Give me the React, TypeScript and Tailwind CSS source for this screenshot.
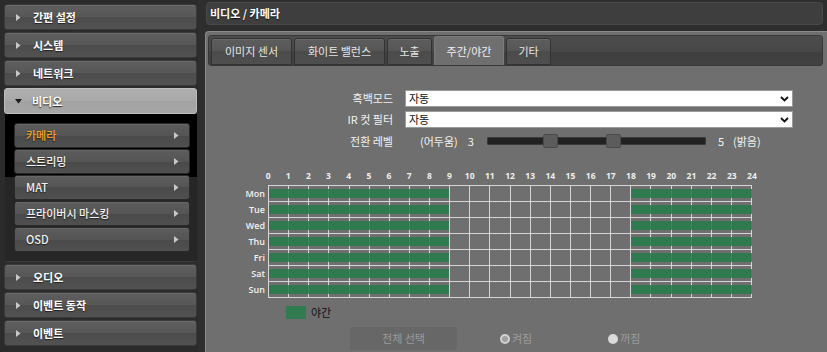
import React from "react";

function Arrow({ down = false, dark = false }: { down?: boolean; dark?: boolean }) {
  if (down) {
    return (
      <svg width="7" height="5" viewBox="0 0 7 5" className="shrink-0">
        <polygon points="0,0 7,0 3.5,4.5" fill={dark ? "#1a1a1a" : "#ccc"} />
      </svg>
    );
  }
  return (
    <svg width="5" height="7" viewBox="0 0 5 7" className="shrink-0">
      <polygon points="0,0 4.5,3.5 0,7" fill={dark ? "#1a1a1a" : "#c8c8c8"} />
    </svg>
  );
}

function MenuItem({ label, active = false }: { label: string; active?: boolean }) {
  return (
    <div
      className={
        active
          ? "h-[26px] shrink-0 rounded-[3px] border border-[#bdbdbd] bg-[linear-gradient(#b0b0b0,#a8a8a8_50%,#a2a2a2_50%,#a6a6a6)] flex items-center pl-[10px] gap-[10px]"
          : "h-[26px] shrink-0 rounded-[3px] border border-[#3a3a3a] bg-[linear-gradient(#5e5e5e,#575757_50%,#4c4c4c_50%,#525252)] shadow-[inset_0_1px_0_#6a6a6a] flex items-center pl-[11px] gap-[12px]"
      }
    >
      <Arrow down={active} dark={active} />
      <span className="text-[11px] font-bold text-white leading-none [text-shadow:0_1px_1px_#222]">{label}</span>
    </div>
  );
}

function SubItem({ label, active = false }: { label: string; active?: boolean }) {
  return (
    <div className="h-[25px] shrink-0 rounded-[3px] border border-[#2a2a2a] bg-[linear-gradient(#5c5c5c,#555_50%,#4a4a4a_50%,#505050)] shadow-[inset_0_1px_0_#666] flex items-center justify-between pl-[11px] pr-[10px]">
      <span
        className={
          active
            ? "text-[11px] font-medium text-[#f5a21f] leading-none [text-shadow:0_1px_1px_#222]"
            : "text-[11px] font-medium text-[#f2f2f2] leading-none [text-shadow:0_1px_1px_#222]"
        }
      >
        {label}
      </span>
      <Arrow />
    </div>
  );
}

function Tab({ label, w, active = false }: { label: string; w: string; active?: boolean }) {
  return (
    <div
      className={
        active
          ? `${w} h-[29px] rounded-t-[3px] bg-[#6f6f6f] border border-b-0 border-[#7c7c7c] flex items-center justify-center text-[11px] text-[#f0f0f0]`
          : `${w} h-[27px] rounded-t-[3px] border border-[#333] bg-[linear-gradient(#5d5d5d,#565656_50%,#4b4b4b_50%,#4f4f4f)] shadow-[inset_0_1px_0_#6a6a6a] flex items-center justify-center text-[11px] text-[#e6e6e6]`
      }
    >
      {label}
    </div>
  );
}

function SelectBox({ value }: { value: string }) {
  return (
    <div className="ml-[12px] w-[388px] h-[17px] bg-white border border-[#9a9a9a] flex items-center justify-between pl-[3px] pr-[3px]">
      <span className="text-[11px] text-[#111] leading-none">{value}</span>
      <svg width="9" height="6" viewBox="0 0 9 6">
        <polyline points="1,1 4.5,4.5 8,1" fill="none" stroke="#111" strokeWidth="1.8" />
      </svg>
    </div>
  );
}

export default function App() {
  const hours = Array.from({ length: 25 }, (_, i) => i);
  const cells = Array.from({ length: 24 }, (_, i) => i);
  const days = ["Mon", "Tue", "Wed", "Thu", "Fri", "Sat", "Sun"];

  return (
    <div className="w-[827px] h-[352px] overflow-hidden flex bg-[#2c2c2c] font-['Noto_Sans_CJK_KR','Noto_Sans',sans-serif]">
      {/* Sidebar */}
      <div className="w-[198px] shrink-0 flex flex-col gap-[2px] pt-[4px] pl-[4px] pr-[1px] bg-[#2b2b2b]">
        <MenuItem label="간편 설정" />
        <MenuItem label="시스템" />
        <MenuItem label="네트워크" />
        <div className="flex flex-col">
          <MenuItem label="비디오" active />
          <div className="h-[148px] ml-[1px] bg-[linear-gradient(#000_0px,#000_63px,#262626_63px,#262626)] border-b border-[#3c3c3c] rounded-b-[2px] flex flex-col gap-[1px] pt-[9px] pl-[9px] pr-[7px]">
            <SubItem label="카메라" active />
            <SubItem label="스트리밍" />
            <SubItem label="MAT" />
            <SubItem label="프라이버시 마스킹" />
            <SubItem label="OSD" />
          </div>
        </div>
        <MenuItem label="오디오" />
        <MenuItem label="이벤트 동작" />
        <MenuItem label="이벤트" />
      </div>

      {/* Main */}
      <div className="flex-1 flex flex-col pl-[7px] pt-[2px] bg-[#2e2e2e]">
        <div className="h-[23px] shrink-0 ml-[1px] mr-[4px] rounded-[4px] bg-[#3e3e3e] border border-[#4a4a4a] flex items-center pl-[3px]">
          <span className="text-[11px] font-bold text-white leading-none [text-shadow:0_1px_1px_#111]">비디오 / 카메라</span>
        </div>

        <div className="mt-[6px] flex-1 bg-[#6f6f6f] border-t border-l border-[#8a8a8a] rounded-tl-[4px] flex flex-col">
          {/* Tab bar */}
          <div className="mt-[3px] ml-[2px] mr-[4px] h-[31px] rounded-[3px] border border-[#383838] bg-[linear-gradient(#4c4c4c,#474747_55%,#3f3f3f_55%,#414141)] flex items-end gap-[2px] pl-[2px]">
            <Tab label="이미지 센서" w="w-[81px]" />
            <Tab label="화이트 밸런스" w="w-[91px]" />
            <Tab label="노출" w="w-[45px]" />
            <Tab label="주간/야간" w="w-[70px]" active />
            <Tab label="기타" w="w-[45px]" />
          </div>

          {/* Form */}
          <div className="mt-[24px] flex flex-col text-[11px] text-[#f2f2f2]">
            <div className="flex items-center h-[17px]">
              <div className="w-[187px] text-right leading-none">흑백모드</div>
              <SelectBox value="자동" />
            </div>
            <div className="flex items-center h-[17px] mt-[4px]">
              <div className="w-[187px] text-right leading-none">IR 컷 필터</div>
              <SelectBox value="자동" />
            </div>
            <div className="flex items-center h-[14px] mt-[6px]">
              <div className="w-[187px] text-right leading-none">전환 레벨</div>
              <div className="ml-[27px] leading-none">(어두움)</div>
              <div className="ml-[10px] leading-none">3</div>
              <div className="ml-[13px] w-[219px] h-[8px] bg-[#222] border border-[#3a3a3a] rounded-[1px] relative">
                <div className="absolute left-[55px] top-[-4px] w-[15px] h-[14px] rounded-[2px] bg-[#5c5c5c] border border-[#4a4a4a]" />
                <div className="absolute left-[118px] top-[-4px] w-[15px] h-[14px] rounded-[2px] bg-[#5c5c5c] border border-[#4a4a4a]" />
              </div>
              <div className="ml-[12px] leading-none">5</div>
              <div className="ml-[9px] leading-none">(밝음)</div>
            </div>
          </div>

          {/* Schedule grid */}
          <div className="mt-[22px] flex flex-col">
            <div className="ml-[52px] w-[504px] grid grid-cols-[repeat(25,minmax(0,1fr))] text-[8.5px] font-bold text-[#f0f0f0] leading-[12px] text-center font-['Open_Sans',sans-serif]">
              {hours.map((h) => (
                <div key={h}>{h}</div>
              ))}
            </div>
            <div className="flex mt-[3px]">
              <div className="w-[59px] flex flex-col pt-[1px]">
                {days.map((d) => (
                  <div key={d} className="h-[16px] flex items-center justify-end text-[9px] text-[#f2f2f2] font-semibold font-['Open_Sans',sans-serif]">
                    {d}
                  </div>
                ))}
              </div>
              <div className="ml-[3px] w-[484px] border-l border-t border-[#d6d6d6] flex flex-col">
                {days.map((d) => (
                  <div key={d} className="relative h-[16px] flex">
                    {cells.map((c) => (
                      <div key={c} className="flex-1 border-r border-b border-[#d6d6d6]" />
                    ))}
                    <div className="absolute left-0 top-[3px] h-[9px] w-[calc(37.5%-1px)] bg-[rgba(38,124,74,0.86)]" />
                    <div className="absolute left-[75%] right-0 top-[3px] h-[9px] bg-[rgba(38,124,74,0.86)]" />
                  </div>
                ))}
              </div>
            </div>
          </div>

          {/* Legend */}
          <div className="mt-[8px] ml-[80px] flex items-center gap-[5px]">
            <div className="w-[20px] h-[13px] bg-[#327a50]" />
            <span className="text-[11px] text-[#111] leading-none">야간</span>
          </div>

          {/* Buttons */}
          <div className="mt-[8px] ml-[144px] flex items-center">
            <div className="w-[107px] h-[23px] bg-[#676767] rounded-[2px] flex items-center justify-center text-[11px] text-[#9c9c9c]">
              전체 선택
            </div>
            <div className="ml-[43px] flex items-center gap-[2px]">
              <div className="w-[10px] h-[10px] rounded-full bg-[#d2d2d2] flex items-center justify-center">
                <div className="w-[6px] h-[6px] rounded-full bg-[#a0a0a0]" />
              </div>
              <span className="text-[11px] text-[#9c9c9c] leading-none">켜짐</span>
            </div>
            <div className="ml-[76px] flex items-center gap-[2px]">
              <div className="w-[10px] h-[10px] rounded-full bg-[#dadada]" />
              <span className="text-[11px] text-[#9c9c9c] leading-none">꺼짐</span>
            </div>
          </div>
        </div>
      </div>
    </div>
  );
}
